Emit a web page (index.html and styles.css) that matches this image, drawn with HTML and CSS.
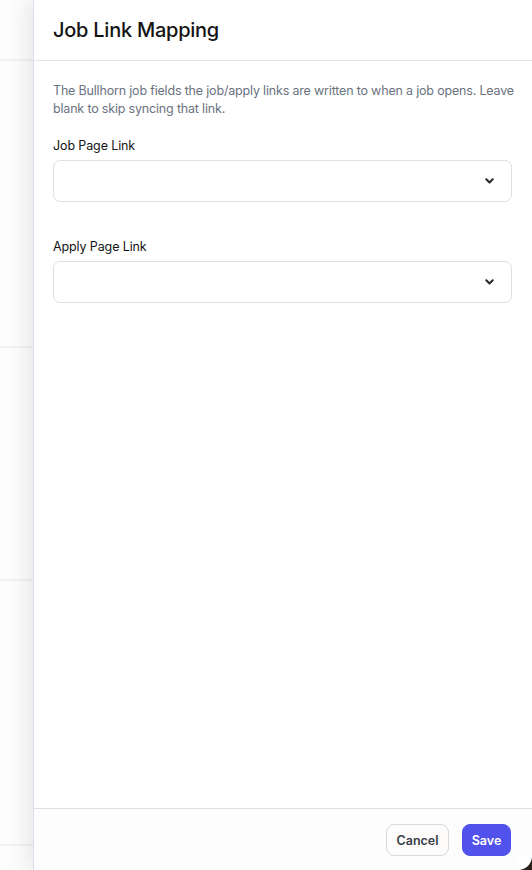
FILE: index.html
```html
<!DOCTYPE html>
<html lang="en">
<head>
<meta charset="utf-8">
<title>Job Link Mapping</title>
<link rel="stylesheet" href="styles.css">
</head>
<body>
<div class="app">
  <div class="backdrop">
    <div class="row r1"></div>
    <div class="row r2"></div>
    <div class="row r3"></div>
    <div class="row r4"></div>
  </div>
  <aside class="panel">
    <header class="panel-header">
      <h1 class="title">Job Link Mapping</h1>
    </header>
    <div class="panel-body">
      <p class="desc">The Bullhorn job fields the job/apply links are written to when a job opens. Leave blank to skip syncing that link.</p>
      <div class="field">
        <label class="label">Job Page Link</label>
        <div class="select">
          <svg class="chev" width="9" height="6" viewBox="0 0 9 6"><path d="M1.3 1.3L4.5 4.5l3.2-3.2" fill="none" stroke="#2b2b2b" stroke-width="2.1" stroke-linecap="round" stroke-linejoin="round"/></svg>
        </div>
      </div>
      <div class="field">
        <label class="label">Apply Page Link</label>
        <div class="select">
          <svg class="chev" width="9" height="6" viewBox="0 0 9 6"><path d="M1.3 1.3L4.5 4.5l3.2-3.2" fill="none" stroke="#2b2b2b" stroke-width="2.1" stroke-linecap="round" stroke-linejoin="round"/></svg>
        </div>
      </div>
    </div>
    <footer class="panel-footer">
      <button class="btn btn-cancel">Cancel</button>
      <button class="btn btn-save">Save</button>
    </footer>
  </aside>
  <div class="corner"></div>
</div>
</body>
</html>
```

FILE: styles.css
```css
* { box-sizing: border-box; }
html, body { margin: 0; padding: 0; height: 100%; }
body {
  font-family: Inter, "Noto Sans", sans-serif;
  background: #fdfdfd;
  color: #111827;
  overflow: hidden;
}
.app {
  display: flex;
  height: 870px;
  position: relative;
}
.backdrop {
  width: 33px;
  flex: none;
  display: flex;
  flex-direction: column;
  background: #fdfdfd;
}
.row { height: 2px; background: #f1f2f4; }
.r1 { margin-top: 59px; }
.r2 { margin-top: 285px; }
.r3 { margin-top: 231px; }
.r4 { margin-top: 263px; }
.panel {
  flex: 1;
  display: flex;
  flex-direction: column;
  background: #fff;
  border-left: 1px solid #d9e2ec;
  box-shadow: -8px 0 18px rgba(0, 0, 0, 0.08);
  position: relative;
  z-index: 1;
}
.panel-header {
  height: 61px;
  flex: none;
  display: flex;
  align-items: center;
  padding: 0 19px;
  border-bottom: 1px solid #e3e5e8;
}
.title {
  margin: 0;
  font-size: 20px;
  font-weight: 500;
  letter-spacing: -0.25px;
  color: #141414;
}
.panel-body {
  flex: 1;
  padding: 21px 20px 0 19px;
}
.desc {
  margin: 0 -8px 19px 0;
  font-size: 12.5px;
  line-height: 18px;
  letter-spacing: -0.18px;
  color: #6b7280;
}
.field {
  display: flex;
  flex-direction: column;
  gap: 5px;
  margin-bottom: 36px;
}
.label {
  font-size: 12.5px;
  line-height: 18px;
  letter-spacing: -0.12px;
  color: #141414;
}
.select {
  height: 42px;
  border: 1px solid #dcdfe3;
  border-radius: 7px;
  background: #fff;
  display: flex;
  align-items: center;
  justify-content: flex-end;
  padding-right: 17px;
}
.chev { display: block; }
.panel-footer {
  height: 62px;
  flex: none;
  border-top: 1px solid #dcdfe3;
  background: #fdfdfd;
  display: flex;
  justify-content: flex-end;
  align-items: flex-start;
  gap: 13px;
  padding: 15px 21px 0 0;
}
.btn {
  height: 32px;
  border-radius: 8px;
  font-family: Inter, "Noto Sans", sans-serif;
  font-size: 12.5px;
  font-weight: 600;
  padding: 0 6px;
  cursor: pointer;
}
.btn-cancel {
  width: 63px;
  background: #fdfcfb;
  border: 1px solid #d8dade;
  color: #383e48;
}
.btn-save {
  width: 49px;
  background: #5151ec;
  border: 1px solid #5151ec;
  color: #fff;
}
.corner {
  position: absolute;
  right: 0;
  bottom: 0;
  width: 14px;
  height: 14px;
  z-index: 2;
  background: radial-gradient(circle at 0 0, #fff 13.5px, #2a2118 14.5px);
}
```
